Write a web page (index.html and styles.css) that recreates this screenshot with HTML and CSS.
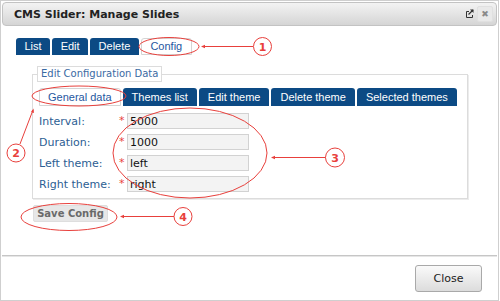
FILE: index.html
```html
<!DOCTYPE html>
<html>
<head>
<meta charset="utf-8">
<link rel="stylesheet" href="styles.css">
</head>
<body>
<div class="dialog">
  <div class="titlebar">
    <span class="title">CMS Slider: Manage Slides</span>
    <span class="tb-icons">
      <svg class="ext" width="9" height="9" viewBox="0 0 9 9"><path d="M4 2.5H1.5V8.5H7.5V6" fill="none" stroke="#333" stroke-width="1"/><path d="M3.5 5.5L8 1" stroke="#333" stroke-width="1.2"/><path d="M5 0.5H8.5V4Z" fill="#333"/></svg>
      <span class="xbtn">✖</span>
    </span>
  </div>
  <div class="content">
    <ul class="tabs main-tabs">
      <li class="tab">List</li>
      <li class="tab">Edit</li>
      <li class="tab">Delete</li>
      <li class="tab active">Config</li>
    </ul>
    <fieldset class="cfg">
      <legend>Edit Configuration Data</legend>
      <ul class="tabs sub-tabs">
        <li class="tab active">General data</li>
        <li class="tab">Themes list</li>
        <li class="tab">Edit theme</li>
        <li class="tab">Delete theme</li>
        <li class="tab">Selected themes</li>
      </ul>
      <div class="form">
        <label>Interval:</label><span class="req">*</span><input class="field" value="5000">
        <label>Duration:</label><span class="req">*</span><input class="field" value="1000">
        <label>Left theme:</label><span class="req">*</span><input class="field" value="left">
        <label>Right theme:</label><span class="req">*</span><input class="field" value="right">
      </div>
    </fieldset>
    <button class="save">Save Config</button>
  </div>
  <div class="buttonpane">
    <button class="close">Close</button>
  </div>
</div>
<svg class="annot" width="500" height="301" viewBox="0 0 500 301">
  <g fill="none" stroke="#e8403c" stroke-width="1">
    <ellipse cx="169" cy="46.5" rx="30" ry="9"/>
    <line x1="203" y1="46.5" x2="253" y2="46.5"/>
    <circle cx="262.5" cy="46.5" r="9" fill="#fff"/>
    <ellipse cx="79" cy="96" rx="47" ry="10"/>
    <line x1="20" y1="144" x2="33" y2="110"/>
    <circle cx="16" cy="153" r="9" fill="#fff"/>
    <ellipse cx="190" cy="153" rx="77" ry="45"/>
    <line x1="273" y1="157.5" x2="326" y2="157.5"/>
    <circle cx="335" cy="157.5" r="9.5" fill="#fff"/>
    <ellipse cx="69" cy="217" rx="48" ry="13.5"/>
    <line x1="122" y1="216.5" x2="174" y2="216.5"/>
    <circle cx="183" cy="216.5" r="9" fill="#fff"/>
  </g>
  <g fill="#e8403c">
    <path d="M201 46.5L205 44.8V48.2Z"/>
    <path d="M33.5 108.5L34 113L31 112Z"/>
    <path d="M271 157.5L275 155.8V159.2Z"/>
    <path d="M120 216.5L124 214.8V218.2Z"/>
  </g>
  <g class="num" fill="#e8403c" text-anchor="middle">
    <text x="262.5" y="50.5">1</text>
    <text x="16" y="157">2</text>
    <text x="335" y="161.5">3</text>
    <text x="183" y="220.5">4</text>
  </g>
</svg>
</body>
</html>
```
FILE: styles.css
```css
html, body {
  margin: 0;
  padding: 0;
  background: #fff;
}
body {
  position: relative;
  width: 500px;
  height: 301px;
  overflow: hidden;
  font-family: "DejaVu Sans", Verdana, sans-serif;
}
.dialog {
  box-sizing: border-box;
  width: 499px;
  height: 301px;
  border: 1px solid #cfcfcf;
  padding: 1px 1px 0 1px;
  display: flex;
  flex-direction: column;
}
.titlebar {
  box-sizing: border-box;
  height: 24px;
  border: 1px solid #c3c3c3;
  border-radius: 4px;
  background: linear-gradient(#f3f3f3, #d5d5d5);
  display: flex;
  align-items: center;
  justify-content: space-between;
  padding: 0 3px 0 11px;
}
.title {
  font-weight: bold;
  font-size: 11px;
  color: #222;
}
.tb-icons {
  display: flex;
  align-items: center;
  gap: 3px;
}
.ext {
  display: block;
  margin-top: -1px;
}
.xbtn {
  box-sizing: border-box;
  width: 16px;
  height: 16px;
  background: #e9e9e9;
  border: 1px solid #e0e0e0;
  border-radius: 2px;
  color: #8a8a8a;
  font-size: 9px;
  line-height: 14px;
  text-align: center;
}
.content {
  flex: 1;
  padding: 12px 0 0 14px;
  display: flex;
  flex-direction: column;
  align-items: flex-start;
}
.tabs {
  list-style: none;
  margin: 0;
  padding: 0;
  display: flex;
  gap: 2px;
}
.tab {
  box-sizing: border-box;
  height: 17px;
  line-height: 17px;
  padding: 0 8.5px;
  font-family: "Liberation Sans", Arial, sans-serif;
  font-size: 11px;
  color: #fff;
  background: #0c4a84;
  border-radius: 3px 3px 0 0;
}
.tab.active {
  background: #fff;
  color: #1f57a0;
  border: 1px solid #d4d4d4;
  line-height: 15px;
}
.cfg {
  box-sizing: border-box;
  width: 436px;
  margin: 11px 0 0 16px;
  padding: 6px 6px 6px 6px;
  border: 1px solid #dcdcdc;
  box-shadow: 1px 1px 0 #ececec;
}
.cfg legend {
  margin-left: -2px;
  padding: 0 3px;
  border: 1px solid #dcdcdc;
  font-size: 10px;
  line-height: 14px;
  color: #3a6aa3;
}
.sub-tabs .tab {
  height: 18px;
  line-height: 18px;
  padding: 0 9px;
}
.sub-tabs .tab.active {
  line-height: 16px;
  padding: 0 8px;
}
.form {
  margin-top: 7px;
  display: grid;
  grid-template-columns: 80px 8px 122px;
  row-gap: 5px;
  align-items: center;
}
.form label {
  font-size: 11px;
  color: #2c5e93;
  white-space: nowrap;
}
.req {
  color: #e8403c;
  font-size: 11px;
  line-height: 10px;
}
.field {
  box-sizing: border-box;
  width: 122px;
  height: 16px;
  margin: 0;
  padding: 0 2px;
  border: 1px solid #d2d2d2;
  background: #f3f3f3;
  font-family: "DejaVu Sans", Verdana, sans-serif;
  font-size: 11px;
  color: #111;
}
.save {
  box-sizing: border-box;
  margin: 6px 0 0 17px;
  width: 75px;
  height: 17px;
  padding: 0;
  border: 1px solid #dedede;
  border-radius: 2px;
  background: #e7e7e7;
  color: #6a6a6a;
  font-family: "DejaVu Sans", Verdana, sans-serif;
  font-weight: bold;
  font-size: 10px;
}
.buttonpane {
  box-sizing: border-box;
  height: 45px;
  border-top: 1px solid #c6c6c6;
  box-shadow: inset 0 1px 0 #e6e6e6;
  display: flex;
  justify-content: flex-end;
  align-items: flex-start;
  padding: 9px 15px 0 0;
}
.close {
  box-sizing: border-box;
  width: 67px;
  height: 27px;
  padding: 0;
  border: 1px solid #a9a9a9;
  border-radius: 3px;
  background: linear-gradient(#fafafa, #dcdcdc);
  font-family: "DejaVu Sans", Verdana, sans-serif;
  font-size: 11px;
  color: #222;
}
.annot {
  position: absolute;
  left: 0;
  top: 0;
  pointer-events: none;
}
.num text {
  font-family: "DejaVu Sans", Verdana, sans-serif;
  font-weight: bold;
  font-size: 11px;
}
```
